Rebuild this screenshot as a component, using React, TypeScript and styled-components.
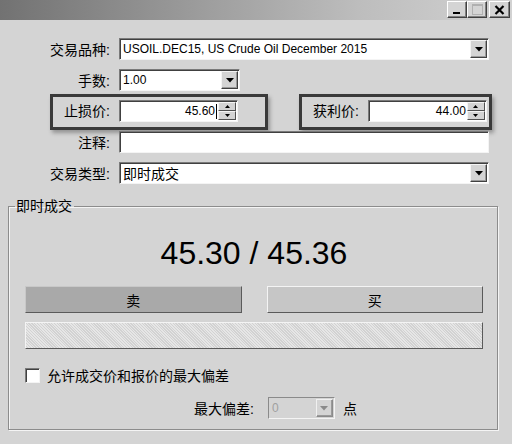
import React from 'react';
import styled, { createGlobalStyle } from 'styled-components';

const GlobalStyle = createGlobalStyle`
  html, body {
    margin: 0;
    padding: 0;
    background: #d4d4d4;
  }
  body {
    font-family: "Liberation Sans", "Noto Sans CJK SC", sans-serif;
    color: #000;
  }
`;

const Triangle: React.FC<{ color?: string }> = ({ color = '#000' }) => (
    <svg width="8" height="5" viewBox="0 0 8 5">
        <polygon points="0,0 8,0 4,4.5" fill={color} />
    </svg>
);

const Spinner: React.FC = () => (
    <SpinBox>
        <SpinHalf>
            <svg width="5" height="3" viewBox="0 0 5 3"><polygon points="2.5,0 5,3 0,3" fill="#000" /></svg>
        </SpinHalf>
        <SpinHalf>
            <svg width="5" height="3" viewBox="0 0 5 3"><polygon points="0,0 5,0 2.5,3" fill="#000" /></svg>
        </SpinHalf>
    </SpinBox>
);

const App: React.FC = () => {
    return (
        <Window>
            <GlobalStyle />
            <TitleBar>
                <TitleButton $width={20}>
                    <svg width="10" height="10" viewBox="0 0 10 10"><rect x="1" y="7" width="7" height="2" fill="#000" /></svg>
                </TitleButton>
                <TitleButton $width={20}>
                    <svg width="11" height="11" viewBox="0 0 11 11">
                        <rect x="0.5" y="0.5" width="10" height="10" fill="none" stroke="#b0b0b0" />
                        <rect x="0.5" y="0.5" width="10" height="1.5" fill="#b0b0b0" />
                    </svg>
                </TitleButton>
                <TitleButton $width={21} $gap>
                    <svg width="11" height="10" viewBox="0 0 11 10">
                        <path d="M1.5 1 L9.5 9 M9.5 1 L1.5 9" stroke="#000" strokeWidth="2.2" />
                    </svg>
                </TitleButton>
            </TitleBar>

            <Form>
                <FieldRow>
                    <Label>交易品种:</Label>
                    <Field $width={370}>
                        <FieldText>USOIL.DEC15, US Crude Oil December 2015</FieldText>
                        <DropButton><Triangle /></DropButton>
                    </Field>
                </FieldRow>
                <FieldRow>
                    <Label>手数:</Label>
                    <Field $width={121}>
                        <FieldText>1.00</FieldText>
                        <DropButton><Triangle /></DropButton>
                    </Field>
                </FieldRow>
                <HighlightRow>
                    <HighlightBox $width={218} $offset={50}>
                        <BoxLabel $width={57}>止损价:</BoxLabel>
                        <Field $width={119}>
                            <NumberText>45.60<Caret /></NumberText>
                            <Spinner />
                        </Field>
                    </HighlightBox>
                    <HighlightBox $width={193} $offset={31} $padLeft={11}>
                        <BoxLabel>获利价:</BoxLabel>
                        <Field $width={119}>
                            <NumberText>44.00</NumberText>
                            <Spinner />
                        </Field>
                    </HighlightBox>
                </HighlightRow>
                <FieldRow>
                    <Label>注释:</Label>
                    <Field $width={370} />
                </FieldRow>
                <FieldRow>
                    <Label>交易类型:</Label>
                    <Field $width={370}>
                        <FieldText $cjk>即时成交</FieldText>
                        <DropButton><Triangle /></DropButton>
                    </Field>
                </FieldRow>
            </Form>

            <Group>
                <Legend>即时成交</Legend>
                <Price>45.30 / 45.36</Price>
                <ButtonRow>
                    <ActionButton $pressed>卖</ActionButton>
                    <ActionButton>买</ActionButton>
                </ButtonRow>
                <HatchBar />
                <CheckRow>
                    <CheckBox />
                    <span>允许成交价和报价的最大偏差</span>
                </CheckRow>
                <DeviationRow>
                    <span>最大偏差:</span>
                    <DisabledField>
                        <DisabledText>0</DisabledText>
                        <DropButton $disabled><Triangle color="#8a8a8a" /></DropButton>
                    </DisabledField>
                    <span>点</span>
                </DeviationRow>
            </Group>
        </Window>
    );
};

export default App;

const Window = styled.div`
    width: 512px;
    height: 444px;
    overflow: hidden;
    background: #d4d4d4;
    display: flex;
    flex-direction: column;
`;

const TitleBar = styled.div`
    height: 20px;
    flex-shrink: 0;
    background: linear-gradient(to right, #727272 0%, #989898 35%, #bdbdbd 70%, #d2d2d2 100%);
    display: flex;
    justify-content: flex-end;
    align-items: flex-start;
    padding: 1px 2px 0 0;
    box-sizing: border-box;
`;

const TitleButton = styled.div<{ $width: number; $gap?: boolean }>`
    width: ${p => p.$width}px;
    height: 17px;
    margin-left: ${p => (p.$gap ? '2px' : '0')};
    box-sizing: border-box;
    background: #d4d4d4;
    border: 1px solid;
    border-color: #ffffff #404040 #404040 #ffffff;
    box-shadow: inset -1px -1px 0 #808080;
    display: flex;
    align-items: center;
    justify-content: center;
`;

const Form = styled.div`
    padding-top: 18px;
    display: flex;
    flex-direction: column;
    gap: 9px;
`;

const FieldRow = styled.div`
    display: grid;
    grid-template-columns: 110px auto;
    column-gap: 9px;
    align-items: center;
    height: 22px;
`;

const Label = styled.span`
    text-align: right;
    font-size: 14px;
    white-space: nowrap;
`;

const Field = styled.div<{ $width: number }>`
    width: ${p => p.$width}px;
    height: 22px;
    box-sizing: border-box;
    background: #ffffff;
    border-top: 1px solid #7a7a7a;
    border-left: 1px solid #7a7a7a;
    border-right: 1px solid #f4f4f4;
    border-bottom: 1px solid #f4f4f4;
    box-shadow: inset 1px 1px 0 #404040;
    display: flex;
    align-items: center;
`;

const FieldText = styled.span<{ $cjk?: boolean }>`
    flex: 1;
    padding-left: 3px;
    font-size: ${p => (p.$cjk ? '14px' : '12px')};
    white-space: nowrap;
    overflow: hidden;
`;

const NumberText = styled.span`
    flex: 1;
    font-size: 12px;
    padding-right: 1px;
    display: flex;
    justify-content: flex-end;
    align-items: center;
`;

const Caret = styled.span`
    display: inline-block;
    width: 1px;
    height: 15px;
    background: #000;
    margin-left: 1px;
`;

const DropButton = styled.div<{ $disabled?: boolean }>`
    width: 17px;
    height: 18px;
    margin-right: 1px;
    flex-shrink: 0;
    box-sizing: border-box;
    background: #d4d4d4;
    border: 1px solid;
    border-color: ${p => (p.$disabled ? '#f0f0f0 #8a8a8a #8a8a8a #f0f0f0' : '#f4f4f4 #404040 #404040 #f4f4f4')};
    box-shadow: inset -1px -1px 0 #9a9a9a;
    display: flex;
    align-items: center;
    justify-content: center;
`;

const SpinBox = styled.div`
    width: 18px;
    height: 18px;
    margin-right: 1px;
    flex-shrink: 0;
    display: flex;
    flex-direction: column;
`;

const SpinHalf = styled.div`
    flex: 1;
    box-sizing: border-box;
    background: #d4d4d4;
    border: 1px solid;
    border-color: #f4f4f4 #505050 #505050 #f4f4f4;
    display: flex;
    align-items: center;
    justify-content: center;
`;

const HighlightRow = styled.div`
    display: flex;
    align-items: flex-start;
    height: 22px;
`;

const HighlightBox = styled.div<{ $width: number; $offset: number; $padLeft?: number }>`
    width: ${p => p.$width}px;
    height: 36px;
    margin-top: -6px;
    margin-left: ${p => p.$offset}px;
    box-sizing: border-box;
    border: 3px solid #3a3a3a;
    box-shadow: 2px 3px 4px rgba(0, 0, 0, 0.3);
    padding: 3px 0 0 ${p => p.$padLeft ?? 0}px;
    display: flex;
    align-items: flex-start;
    gap: 9px;
`;

const BoxLabel = styled.span<{ $width?: number }>`
    ${p => (p.$width ? `width: ${p.$width}px;` : '')}
    text-align: right;
    font-size: 14px;
    line-height: 22px;
    white-space: nowrap;
`;

const Group = styled.fieldset`
    margin: 14px 14px 0 8px;
    padding: 0 14px 10px 16px;
    border: 1px solid #8c8c8c;
    box-shadow: inset 1px 1px 0 #f4f4f4, 1px 1px 0 #f4f4f4;
    min-inline-size: 0;
    display: flex;
    flex-direction: column;
`;

const Legend = styled.legend`
    font-size: 14px;
    line-height: 16px;
    padding: 0 2px 0 1px;
    margin-left: -10px;
`;

const Price = styled.div`
    margin-top: 21px;
    font-size: 32px;
    line-height: 37px;
    text-align: center;
`;

const ButtonRow = styled.div`
    margin-top: 14px;
    display: grid;
    grid-template-columns: 1fr 1fr;
    column-gap: 25px;
`;

const ActionButton = styled.div<{ $pressed?: boolean }>`
    height: 27px;
    box-sizing: border-box;
    background: ${p => (p.$pressed ? '#a9a9a9' : '#c6c6c6')};
    border: 1px solid;
    border-color: ${p => (p.$pressed ? '#c8c8c8 #5a5a5a #5a5a5a #c8c8c8' : '#f4f4f4 #5a5a5a #5a5a5a #f4f4f4')};
    font-size: 14px;
    display: flex;
    align-items: center;
    justify-content: center;
`;

const HatchBar = styled.div`
    margin-top: 9px;
    height: 27px;
    box-sizing: border-box;
    border: 1px solid;
    border-color: #f4f4f4 #5a5a5a #5a5a5a #f4f4f4;
    background-color: #dcdcdc;
    background-image: repeating-linear-gradient(45deg, #e6e6e6 0 1px, #d2d2d2 1px 2px);
`;

const CheckRow = styled.div`
    margin-top: 18px;
    display: flex;
    align-items: center;
    gap: 7px;
    font-size: 14px;
    height: 16px;
`;

const CheckBox = styled.div`
    width: 15px;
    height: 15px;
    box-sizing: border-box;
    background: #ffffff;
    border-top: 1px solid #7a7a7a;
    border-left: 1px solid #7a7a7a;
    border-right: 1px solid #f4f4f4;
    border-bottom: 1px solid #f4f4f4;
    box-shadow: inset 1px 1px 0 #404040;
`;

const DeviationRow = styled.div`
    margin-top: 14px;
    padding-left: 169px;
    display: flex;
    align-items: center;
    gap: 8px;
    font-size: 14px;
`;

const DisabledField = styled.div`
    width: 67px;
    height: 22px;
    margin-left: 6px;
    box-sizing: border-box;
    background: #d4d4d4;
    border-top: 1px solid #8a8a8a;
    border-left: 1px solid #8a8a8a;
    border-right: 1px solid #f4f4f4;
    border-bottom: 1px solid #f4f4f4;
    display: flex;
    align-items: center;
`;

const DisabledText = styled.span`
    flex: 1;
    padding-left: 3px;
    font-size: 12px;
    color: #a0a0a0;
`;
